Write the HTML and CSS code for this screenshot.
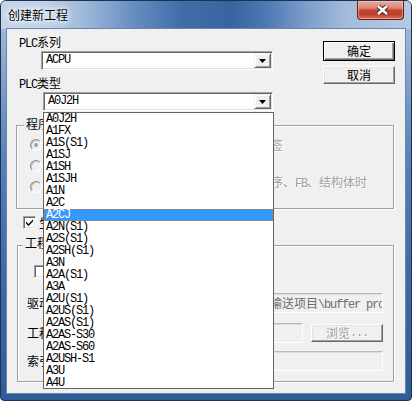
FILE: index.html
```html
<!DOCTYPE html>
<html lang="zh-CN">
<head>
<meta charset="utf-8">
<title>创建新工程</title>
<link rel="stylesheet" href="styles.css">
</head>
<body>
<div class="window">
  <div class="titlebar">
    <span class="title">创建新工程</span>
    <div class="close">
      <svg width="13" height="10" viewBox="0 0 13 10">
        <path d="M2 1 L11 9 M11 1 L2 9" stroke="#3b2b29" stroke-width="4.4" fill="none"/>
        <path d="M2 1 L11 9 M11 1 L2 9" stroke="#ffffff" stroke-width="2.4" fill="none"/>
      </svg>
    </div>
  </div>
  <div class="client">
    <div class="top">
      <div class="fields">
        <div class="lbl"><span class="m">PLC</span>系列</div>
        <div class="combo combo-series">
          <span class="val m">ACPU</span>
          <span class="ddbtn"><svg width="7" height="4" viewBox="0 0 7 4"><path d="M0 0H7L3.5 4Z" fill="#000"/></svg></span>
        </div>
        <div class="lbl lbl-type"><span class="m">PLC</span>类型</div>
        <div class="combo combo-type">
          <span class="val m">A0J2H</span>
          <span class="ddbtn"><svg width="7" height="4" viewBox="0 0 7 4"><path d="M0 0H7L3.5 4Z" fill="#000"/></svg></span>
        </div>
      </div>
      <div class="buttons">
        <div class="btn btn-default">确定</div>
        <div class="btn btn-cancel">取消</div>
      </div>
    </div>

    <fieldset class="group group-prog">
      <legend>程序</legend>
      <div class="opts">
        <div class="opt"><span class="radio on"></span></div>
        <div class="opt"><span class="radio on"></span><span>不使用标签</span></div>
        <div class="opt"><span class="radio"></span></div>
        <div class="opt"><span class="radio"></span></div>
        <div class="opt"><span class="radio"></span></div>
        <div class="opt opt-tall"><span class="radio"></span><span>使用<span class="m">ST</span>程序、<span class="m">FB</span>、结构体时</span></div>
      </div>
    </fieldset>

    <div class="chkrow">
      <span class="chk"><svg width="7" height="7" viewBox="0 0 7 7"><path d="M0 2.5L2.5 5L7 0.5V2.5L2.5 7L0 4.5Z" fill="#000"/></svg></span>
      <span class="chklabel">生</span>
    </div>

    <fieldset class="group group-proj">
      <legend>工程</legend>
      <div class="chkrow2"><span class="chk"></span></div>
      <div class="frow frow-path">
        <span class="flabel">驱动</span>
        <span class="field"><span class="m">C:\MELSEC\GPPW\Project\2019\</span>输送项目<span class="m">\buffer pro</span></span>
      </div>
      <div class="frow frow-name">
        <span class="flabel">工程</span>
        <span class="field"></span>
        <span class="btn btn-disabled">浏览<span class="m">...</span></span>
      </div>
      <div class="frow frow-title">
        <span class="flabel">索引</span>
        <span class="field"></span>
      </div>
    </fieldset>

    <div class="droplist m">
      <div class="it">A0J2H</div>
      <div class="it">A1FX</div>
      <div class="it">A1S(S1)</div>
      <div class="it">A1SJ</div>
      <div class="it">A1SH</div>
      <div class="it">A1SJH</div>
      <div class="it">A1N</div>
      <div class="it">A2C</div>
      <div class="it sel">A2CJ</div>
      <div class="it">A2N(S1)</div>
      <div class="it">A2S(S1)</div>
      <div class="it">A2SH(S1)</div>
      <div class="it">A3N</div>
      <div class="it">A2A(S1)</div>
      <div class="it">A3A</div>
      <div class="it">A2U(S1)</div>
      <div class="it">A2US(S1)</div>
      <div class="it">A2AS(S1)</div>
      <div class="it">A2AS-S30</div>
      <div class="it">A2AS-S60</div>
      <div class="it">A2USH-S1</div>
      <div class="it">A3U</div>
      <div class="it">A4U</div>
    </div>
  </div>
</div>
</body>
</html>
```

FILE: styles.css
```css
* { box-sizing: border-box; }
html, body { margin: 0; padding: 0; }
body {
  width: 412px;
  height: 401px;
  overflow: hidden;
  background: #ffffff;
  font-family: "Noto Sans CJK SC", sans-serif;
  font-size: 12px;
  line-height: 12px;
  color: #000;
}
.m {
  font-family: "Liberation Mono", monospace;
  font-size: 12px;
  letter-spacing: -1.2px;
}

.window {
  width: 412px;
  height: 401px;
  border: 1px solid #1e3150;
  border-radius: 6px 6px 4px 4px;
  background: linear-gradient(to bottom, #b2c6df 0, #86a4cd 70px, #5580b8 160px, #3d69a4 280px, #2f5b97 401px);
  display: flex;
  flex-direction: column;
  overflow: hidden;
}
.titlebar {
  flex: none;
  height: 28px;
  display: flex;
  justify-content: space-between;
  align-items: flex-start;
  padding-left: 7px;
  background: linear-gradient(to right, #c4d5e9 0, #bed1e7 45px, #a2bbdb 80px, #648cc0 135px, #426da9 180px, #3964a1 230px, #4d78b3 265px, #7c9dcb 305px, #a4bbdb 345px, #b6c9e2 412px);
}
.title {
  margin-top: 7px;
  line-height: 14px;
  color: #000;
  text-shadow: 0 0 3px #fff, 0 0 6px #fff, 0 0 9px #fff;
}
.close {
  width: 47px;
  height: 19px;
  margin-right: 7px;
  border: 1px solid #5e231b;
  border-top: none;
  border-radius: 0 0 4px 4px;
  background: linear-gradient(to bottom, #e7ab9f 0, #d98472 40%, #c4432e 52%, #c1402b 75%, #d97560 100%);
  box-shadow: inset 0 0 0 1px rgba(255, 220, 210, 0.45);
  display: flex;
  align-items: center;
  justify-content: center;
  padding-left: 3px;
}

.client {
  flex: none;
  position: relative;
  height: 364px;
  margin: 0 6px;
  background: #f0f0f0;
  box-shadow: 0 0 0 1px #6a86ad;
}

.top { display: flex; height: 82px; }
.fields { flex: 1; padding: 7px 0 0 12px; }
.lbl { height: 12px; line-height: 12px; }
.lbl-type { margin-top: 7px; }
.combo {
  display: flex;
  height: 19px;
  margin-top: 3px;
  padding: 1px;
  background: #fff;
  border: 1px solid;
  border-color: #a0a0a0 #ffffff #ffffff #a0a0a0;
  box-shadow: inset 1px 1px 0 #696969, inset -1px -1px 0 #e3e3e3;
}
.combo-series { width: 232px; margin-left: 22px; }
.combo-type { width: 230px; margin-left: 24px; }
.val { flex: 1; padding-left: 3px; line-height: 15px; }
.ddbtn {
  width: 17px;
  height: 15px;
  flex: none;
  display: flex;
  align-items: center;
  justify-content: center;
  background: #f0f0f0;
  border: 1px solid;
  border-color: #f0f0f0 #696969 #696969 #f0f0f0;
  box-shadow: inset 1px 1px 0 #fff, inset -1px -1px 0 #a0a0a0;
}

.buttons {
  width: 72px;
  flex: none;
  margin-right: 10px;
  padding-top: 12px;
  display: flex;
  flex-direction: column;
  gap: 5px;
}
.btn {
  height: 18px;
  display: flex;
  align-items: center;
  justify-content: center;
  background: #f0f0f0;
  border: 1px solid;
  border-color: #ffffff #696969 #696969 #ffffff;
  box-shadow: inset -1px -1px 0 #a0a0a0, inset 1px 1px 0 #e3e3e3;
}
.btn-default {
  height: 20px;
  border-color: #000;
  box-shadow: inset 1px 1px 0 #fff, inset -1px -1px 0 #696969, inset -2px -2px 0 #a0a0a0;
}
.btn-disabled {
  width: 72px;
  flex: none;
  margin-left: 8px;
  color: #a0a0a0;
  text-shadow: 1px 1px 0 #fff;
}

.group {
  margin: 0;
  padding: 0;
  min-width: 0;
  border: 1px solid #a0a0a0;
  box-shadow: 1px 1px 0 #fff, inset 1px 1px 0 #fff;
}
.group legend {
  padding: 0 2px 2px;
  line-height: 12px;
  background: #f0f0f0;
}
.group-prog {
  width: 378px;
  margin: 7px 0 0 9px;
  padding-bottom: 11px;
}
.group-prog legend { margin-left: 7px; }
.opts {
  margin-top: 2px;
  padding-left: 13px;
  display: grid;
  grid-template-columns: 177px 1fr;
  grid-template-rows: repeat(3, 21px);
}
.opt {
  display: flex;
  align-items: center;
  gap: 4px;
  color: #a0a0a0;
  text-shadow: 1px 1px 0 #fff;
  white-space: nowrap;
}
.opt-tall { align-items: flex-start; }
.opt-tall .radio { margin-top: 5px; }
.radio {
  width: 12px;
  height: 12px;
  flex: none;
  border-radius: 50%;
  border: 1px solid;
  border-color: #8c8c8c #ffffff #ffffff #8c8c8c;
  box-shadow: inset 1px 1px 0 #c4c4c4;
  background: #f0f0f0;
  display: flex;
  align-items: center;
  justify-content: center;
}
.radio.on::after {
  content: "";
  width: 4px;
  height: 4px;
  border-radius: 50%;
  background: #a0a0a0;
}

.chkrow {
  display: flex;
  align-items: center;
  gap: 3px;
  height: 13px;
  margin: 7px 0 0 16px;
  white-space: nowrap;
}
.chk {
  width: 13px;
  height: 13px;
  flex: none;
  display: flex;
  align-items: center;
  justify-content: center;
  background: #fff;
  border: 1px solid;
  border-color: #a0a0a0 #ffffff #ffffff #a0a0a0;
  box-shadow: inset 1px 1px 0 #696969, inset -1px -1px 0 #e3e3e3;
}

.group-proj {
  width: 377px;
  margin: 8px 0 0 10px;
  padding: 0 10px 10px 0;
}
.group-proj legend { margin-left: 5px; padding-bottom: 4px; }
.chkrow2 {
  display: flex;
  align-items: center;
  gap: 3px;
  height: 13px;
  margin: 12px 0 0 16px;
}
.frow {
  display: flex;
  align-items: center;
  height: 20px;
  padding-left: 9px;
}
.frow-path { margin-top: 15px; }
.frow-name { margin-top: 10px; }
.frow-title { margin-top: 8px; }
.flabel { width: 72px; flex: none; white-space: nowrap; }
.field {
  flex: 1;
  height: 20px;
  padding: 0 2px;
  line-height: 18px;
  overflow: hidden;
  white-space: nowrap;
  color: #6d6d6d;
  background: #f0f0f0;
  border: 1px solid;
  border-color: #b9b9b9 #ffffff #ffffff #b9b9b9;
  box-shadow: inset 1px 1px 0 #dcdcdc;
}

.droplist {
  position: absolute;
  left: 36px;
  top: 83px;
  width: 231px;
  height: 277px;
  z-index: 5;
  background: #fff;
  border: 1px solid #646464;
}
.it {
  height: 12px;
  line-height: 12px;
  padding-left: 2px;
  white-space: nowrap;
}
.it.sel {
  background: #3399ff;
  color: #fff;
  border: 1px dotted #c8782a;
  padding-left: 1px;
  line-height: 10px;
}
```
